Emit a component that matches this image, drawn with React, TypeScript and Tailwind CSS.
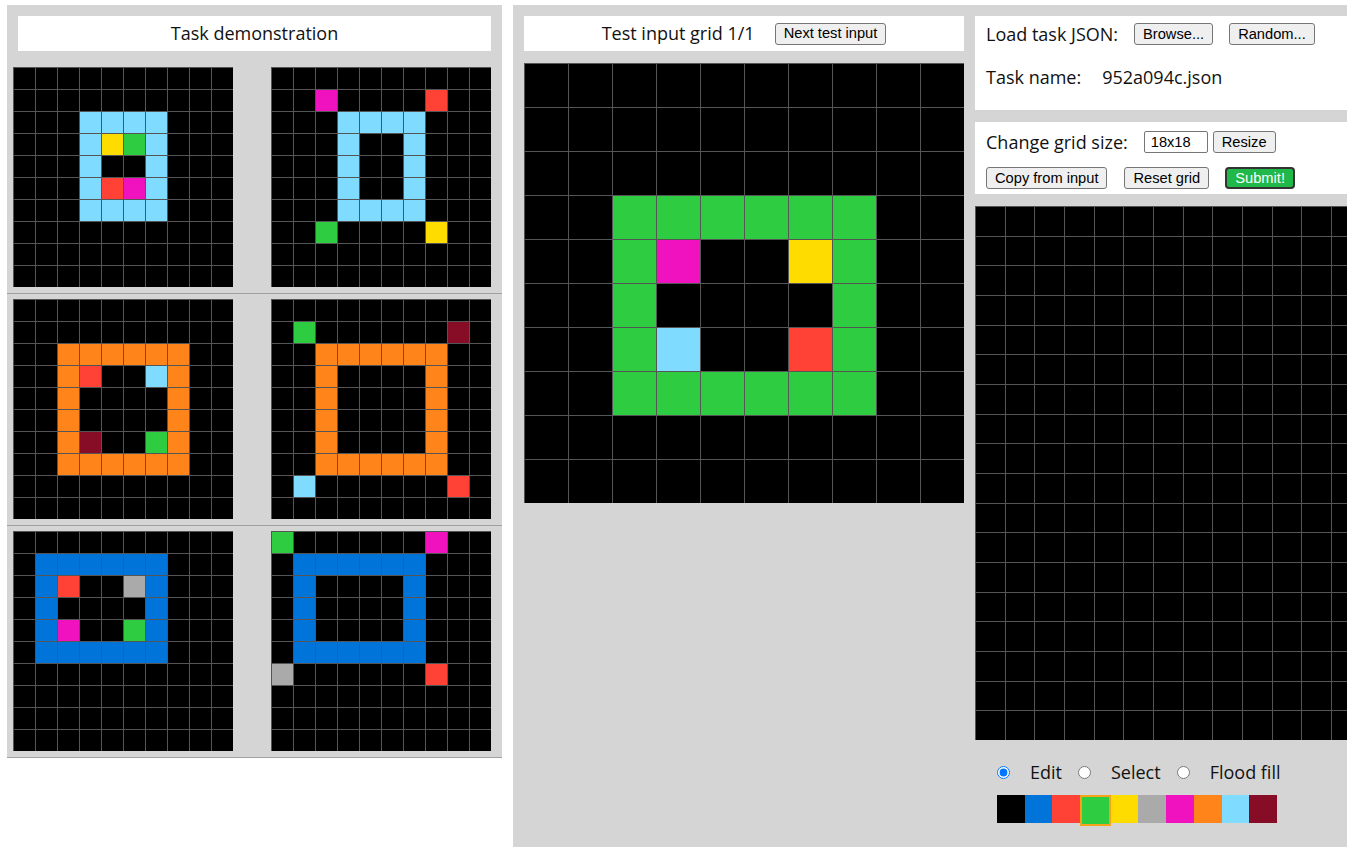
import React from 'react';

const COLORS = [
  'bg-[#000000]',
  'bg-[#0074D9]',
  'bg-[#FF4136]',
  'bg-[#2ECC40]',
  'bg-[#FFDC00]',
  'bg-[#AAAAAA]',
  'bg-[#F012BE]',
  'bg-[#FF851B]',
  'bg-[#7FDBFF]',
  'bg-[#870C25]',
];

const pairs: [string[], string[]][] = [
  [
    ['0000000000', '0000000000', '0008888000', '0008438000', '0008008000', '0008268000', '0008888000', '0000000000', '0000000000', '0000000000'],
    ['0000000000', '0060000200', '0008888000', '0008008000', '0008008000', '0008008000', '0008888000', '0030000400', '0000000000', '0000000000'],
  ],
  [
    ['0000000000', '0000000000', '0077777700', '0072008700', '0070000700', '0070000700', '0079003700', '0077777700', '0000000000', '0000000000'],
    ['0000000000', '0300000090', '0077777700', '0070000700', '0070000700', '0070000700', '0070000700', '0077777700', '0800000020', '0000000000'],
  ],
  [
    ['0000000000', '0111111000', '0120051000', '0100001000', '0160031000', '0111111000', '0000000000', '0000000000', '0000000000', '0000000000'],
    ['3000000600', '0111111000', '0100001000', '0100001000', '0100001000', '0111111000', '5000000200', '0000000000', '0000000000', '0000000000'],
  ],
];

const testInput = ['0000000000', '0000000000', '0000000000', '0033333300', '0036004300', '0030000300', '0038002300', '0033333300', '0000000000', '0000000000'];

const output = Array.from({ length: 18 }, () => '0'.repeat(18));

// small 10x10 grid used in the demonstration panel
const SmallGrid = ({ rows }: { rows: string[] }) => (
  <div className="grid grid-cols-10 gap-px bg-[#555] pt-px pl-px w-[220px] h-[220px]">
    {rows.flatMap((r, i) =>
      r.split('').map((c, j) => <div key={`${i}-${j}`} className={`w-[21px] h-[21px] ${COLORS[+c]}`} />)
    )}
  </div>
);

const TestGrid = ({ rows }: { rows: string[] }) => (
  <div className="grid grid-cols-10 gap-px bg-[#555] pt-px pl-px w-[440px] h-[440px]">
    {rows.flatMap((r, i) =>
      r.split('').map((c, j) => <div key={`${i}-${j}`} className={`w-[43px] h-[43px] ${COLORS[+c]}`} />)
    )}
  </div>
);

const OutputGrid = ({ rows }: { rows: string[] }) => (
  <div className="grid grid-cols-[repeat(18,minmax(0,1fr))] grid-rows-[repeat(18,minmax(0,1fr))] gap-px bg-[#555] pt-px pl-px w-[534px] h-[534px] shrink-0">
    {rows.flatMap((r, i) => r.split('').map((c, j) => <div key={`${i}-${j}`} className={COLORS[+c]} />))}
  </div>
);

const Btn = ({ children, className = '' }: { children: React.ReactNode; className?: string }) => (
  <button
    className={`h-[22px] px-[8px] bg-[#efefef] border border-[#767676] rounded-[3px] text-[14.67px] leading-none text-black font-['Liberation_Sans',Arial,sans-serif] ${className}`}
  >
    {children}
  </button>
);

const App = () => {
  return (
    <div className="w-[1347px] h-[847px] overflow-hidden bg-white flex items-start pt-[5px] pl-[7px] gap-[11px] font-['Open_Sans',sans-serif] text-[18px] text-[#111]">
      {/* Task demonstration */}
      <div className="w-[495px] shrink-0 bg-[#d5d5d5] pt-[11px]">
        <div className="mx-[11px] mb-[11px] h-[35px] bg-white flex items-center justify-center">Task demonstration</div>
        {pairs.map(([inp, out], i) => (
          <div key={i} className="flex justify-between pl-[6px] pr-[11px] pt-[5px] pb-[6px] border-b border-[#a0a0a0]">
            <SmallGrid rows={inp} />
            <SmallGrid rows={out} />
          </div>
        ))}
      </div>

      {/* Test area */}
      <div className="self-stretch shrink-0 w-[1007px] bg-[#d5d5d5] p-[11px] flex items-start gap-[11px]">
        <div className="w-[440px] shrink-0 flex flex-col gap-[12px]">
          <div className="h-[35px] bg-white flex items-center justify-center gap-[20px]">
            <span>Test input grid 1/1</span>
            <Btn>Next test input</Btn>
          </div>
          <TestGrid rows={testInput} />
        </div>

        <div className="w-[534px] shrink-0 flex flex-col gap-[12px]">
          <div className="h-[94px] bg-white px-[11px] flex flex-col">
            <div className="h-[36px] flex items-center">
              <span>Load task JSON:</span>
              <Btn className="ml-[16px]">Browse...</Btn>
              <Btn className="ml-[16px]">Random...</Btn>
            </div>
            <div className="h-[50px] flex items-center">
              <span>Task name:</span>
              <span className="ml-[21px]">952a094c.json</span>
            </div>
          </div>

          <div className="h-[72px] bg-white px-[11px] flex flex-col">
            <div className="h-[40px] flex items-center">
              <span>Change grid size:</span>
              <input
                defaultValue="18x18"
                className="ml-[16px] w-[64px] h-[22px] px-[6px] border border-[#767676] rounded-[2px] bg-white text-[14.67px] text-black font-['Liberation_Sans',Arial,sans-serif]"
              />
              <Btn className="ml-[5px]">Resize</Btn>
            </div>
            <div className="h-[32px] flex items-center">
              <Btn>Copy from input</Btn>
              <Btn className="ml-[17px]">Reset grid</Btn>
              <button className="ml-[16px] h-[22px] px-[8px] bg-[#1fb849] border-2 border-[#333] rounded-[4px] text-[14.67px] leading-none text-white font-['Liberation_Sans',Arial,sans-serif]">
                Submit!
              </button>
            </div>
          </div>

          <OutputGrid rows={output} />

          <div className="pl-[22px] pt-[7px] flex flex-col gap-[10px]">
            <div className="flex items-center h-[26px]">
              <input type="radio" name="mode" defaultChecked className="w-[13px] h-[13px] m-0" />
              <span className="ml-[20px]">Edit</span>
              <input type="radio" name="mode" className="ml-[16px] w-[13px] h-[13px] m-0" />
              <span className="ml-[20px]">Select</span>
              <input type="radio" name="mode" className="ml-[16px] w-[13px] h-[13px] m-0" />
              <span className="ml-[20px]">Flood fill</span>
            </div>
            <div className="flex items-start">
              {COLORS.map((c, i) =>
                i === 3 ? (
                  <div key={i} className={`w-[30.7px] h-[31px] border-2 border-[#f7a21b] ${c}`} />
                ) : (
                  <div key={i} className={`w-[27.7px] h-[28px] ${c}`} />
                )
              )}
            </div>
          </div>
        </div>
      </div>
    </div>
  );
};

export default App;
